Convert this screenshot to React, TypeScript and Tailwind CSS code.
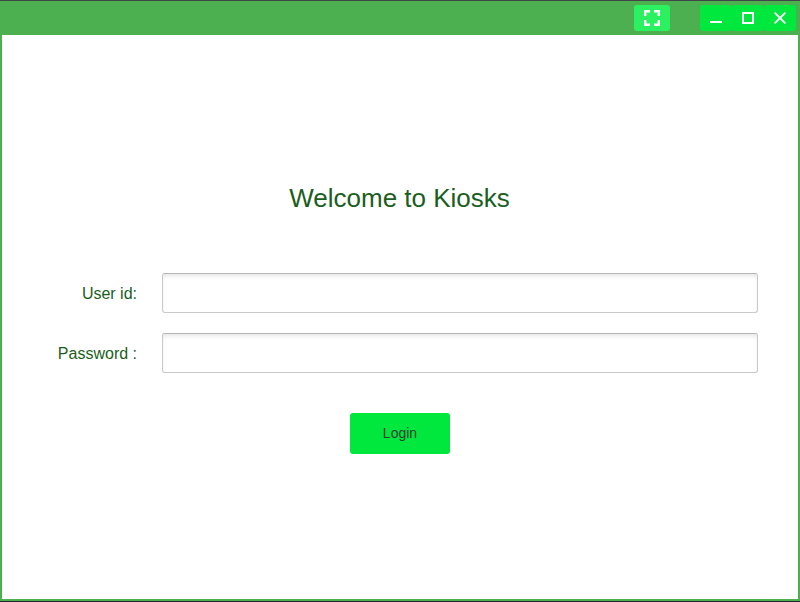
import React from "react";

function TitleBar() {
  return (
    <header className="flex h-[34px] shrink-0 items-start justify-end bg-[#4caf50] pr-0.5 pt-1">
      <button aria-label="Full screen" className="mr-[30px] flex h-[26px] w-9 items-center justify-center rounded-[3px] bg-[#2bf160]">
        <svg width="16" height="16" viewBox="0 0 16 16" fill="none" stroke="#fff" strokeWidth="2.4">
          <path d="M1.2 6V1.2H6M10 1.2H14.8V6M14.8 10V14.8H10M6 14.8H1.2V10" />
        </svg>
      </button>
      <div className="flex">
        <button aria-label="Minimize" className="flex h-[26px] w-8 items-center justify-center rounded-[3px] bg-[#00e83e]">
          <svg width="12" height="12" viewBox="0 0 12 12" fill="none" stroke="#fff" strokeWidth="2">
            <path d="M0 10H12" />
          </svg>
        </button>
        <button aria-label="Maximize" className="flex h-[26px] w-8 items-center justify-center rounded-[3px] bg-[#00e83e]">
          <svg width="12" height="12" viewBox="0 0 12 12" fill="none" stroke="#fff" strokeWidth="2">
            <path d="M1 1H11V11H1Z" />
          </svg>
        </button>
        <button aria-label="Close" className="flex h-[26px] w-8 items-center justify-center rounded-[3px] bg-[#00e83e]">
          <svg width="12" height="12" viewBox="0 0 12 12" fill="none" stroke="#fff" strokeWidth="1.9">
            <path d="M.6 .6L11.4 11.4M11.4 .6L.6 11.4" />
          </svg>
        </button>
      </div>
    </header>
  );
}

function Field({ label, type }: { label: string; type: string }) {
  return (
    <label className="flex h-10 items-center">
      <span className="w-[135px] pt-0.5 text-right text-base">{label}</span>
      <input
        type={type}
        className="ml-[25px] h-10 w-[596px] rounded-[3px] border border-[#c9c9c9] border-t-[#b5b5b5] bg-white px-2 shadow-[inset_0_3px_4px_-1px_rgba(0,0,0,0.1)] outline-none"
      />
    </label>
  );
}

export default function App() {
  return (
    <div className="flex h-[602px] w-[800px] flex-col border-y border-t-[#424548] border-b-[#23272b] bg-white font-['Liberation_Sans',Arial,sans-serif] text-[#1b5e20]">
      <div className="flex flex-1 flex-col border-x-2 border-b-2 border-[#4caf50]">
        <TitleBar />
        <main className="flex flex-col pt-[143px]">
          <h1 className="pr-px text-center text-[26px] leading-10">Welcome to Kiosks</h1>
          <form className="mt-[55px] flex flex-col gap-5">
            <Field label="User id:" type="text" />
            <Field label="Password :" type="password" />
            <button type="button" className="mt-5 h-[41px] w-[100px] self-center rounded-[3px] bg-[#00e83e] pb-0.5 text-sm text-[#323b34]">
              Login
            </button>
          </form>
        </main>
      </div>
    </div>
  );
}
